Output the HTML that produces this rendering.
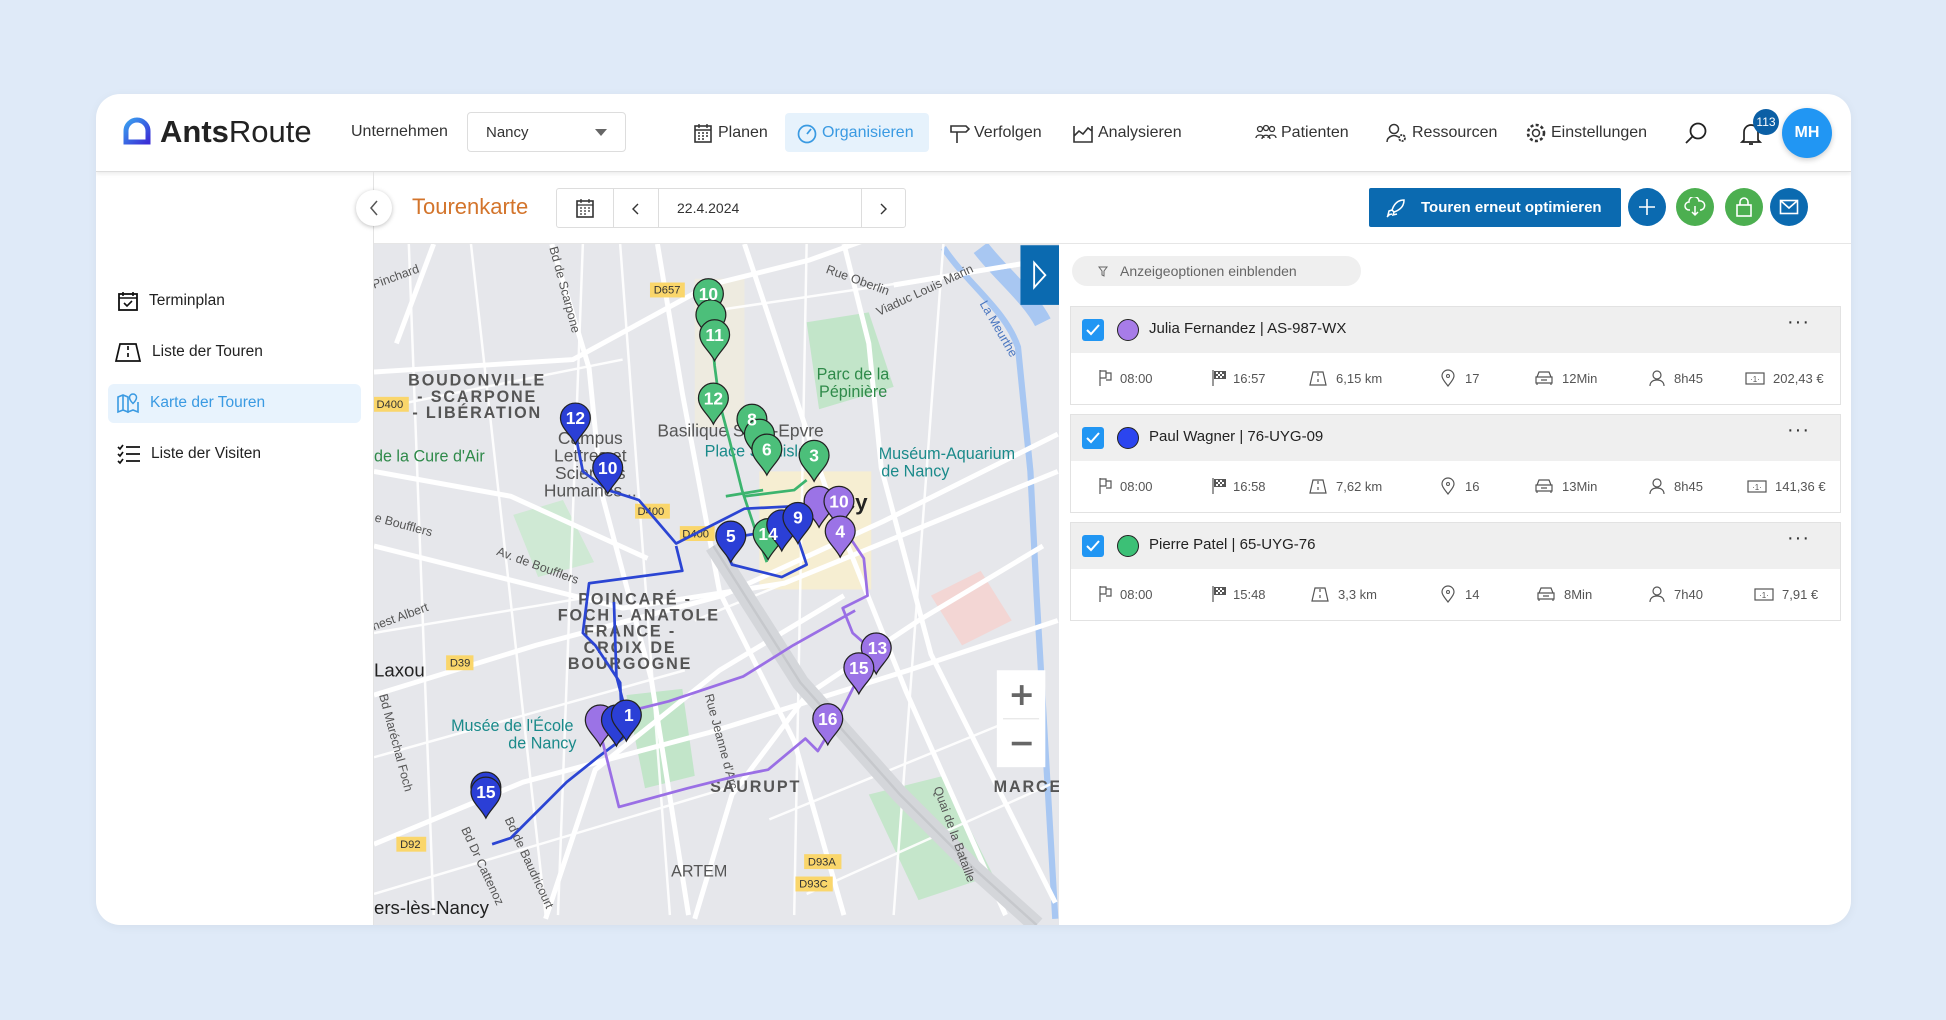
<!DOCTYPE html>
<html><head><meta charset="utf-8">
<style>
*{box-sizing:border-box;margin:0;padding:0}
body{width:1946px;height:1020px;background:#dfeaf8;font-family:"Liberation Sans",sans-serif;position:relative;overflow:hidden;color:#222}
.a{position:absolute}
.card{left:96px;top:94px;width:1755px;height:831px;background:#fff;border-radius:24px;overflow:hidden;box-shadow:0 2px 10px rgba(0,0,0,.05)}
.hdr{left:0;top:0;width:1755px;height:78px;border-bottom:1px solid #ddd;box-shadow:0 2px 4px rgba(0,0,0,.08)}
.nav{font-size:16px;color:#333;top:0;height:78px;display:flex;align-items:center;gap:4px}
.nav svg{width:22px;height:22px}
.side{font-size:15.5px;color:#222;display:flex;align-items:center;gap:10px}
.st{font-size:13px;color:#555;display:flex;align-items:center;gap:6px;position:absolute}
.tc{left:1070px;width:771px;height:99px;border:1px solid #e2e2e2;background:#fff}
.tch{height:46px;background:#efefef;position:relative}
.cb{position:absolute;left:11px;top:12px;width:22px;height:22px;background:#2196f3;border-radius:3px}
.dot{position:absolute;left:46px;top:12px;width:22px;height:22px;border-radius:50%;border:1.5px solid #222}
.nm{position:absolute;left:78px;top:13px;font-size:15px;color:#222}
.more{position:absolute;right:30px;top:4px;font-size:20px;letter-spacing:1px;color:#333}
.rb{width:38px;height:38px;border-radius:50%;top:94px;display:flex;align-items:center;justify-content:center}
</style></head><body>
<div class="a card">
 <div class="a hdr">
  <svg class="a" style="left:27px;top:23px" width="28" height="28" viewBox="0 0 28 28"><defs><linearGradient id="lg" x1="0" y1="0" x2="1" y2="1"><stop offset="0" stop-color="#3aa0f0"/><stop offset="1" stop-color="#3b2fd6"/></linearGradient></defs><path d="M14 3a11 11 0 0 0-11 11v11h22V14A11 11 0 0 0 14 3z" fill="none" stroke="url(#lg)" stroke-width="5"/></svg>
  <div class="a" style="left:64px;top:20px;font-size:31px;color:#222"><b>Ants</b>Route</div>
  <div class="a" style="left:255px;top:29px;font-size:16px;color:#333">Unternehmen</div>
  <div class="a" style="left:371px;top:18px;width:159px;height:40px;border:1px solid #ddd;border-radius:4px;font-size:15px;padding:11px 18px;color:#333">Nancy<span style="position:absolute;right:18px;top:16px;border:6px solid transparent;border-top:7px solid #666;border-bottom:0"></span></div>
  <div class="a nav" style="left:596px"><svg viewBox="0 0 22 22"><rect x="3" y="4" width="16" height="16" fill="none" stroke="#333" stroke-width="1.6"/><path d="M3 8h16M7 2v4M15 2v4M6 11h2M10 11h2M14 11h2M6 14h2M10 14h2M14 14h2M6 17h2M10 17h2" stroke="#333" stroke-width="1.4"/></svg>Planen</div>
  <div class="a" style="left:689px;top:19px;width:144px;height:39px;background:#e6f2fc;border-radius:4px"></div>
  <div class="a nav" style="left:700px;color:#3a9ae2"><svg viewBox="0 0 22 22"><circle cx="11" cy="12" r="8.5" fill="none" stroke="#3a9ae2" stroke-width="1.7"/><path d="M11 12l4-5" stroke="#3a9ae2" stroke-width="1.8"/></svg>Organisieren</div>
  <div class="a nav" style="left:852px"><svg viewBox="0 0 22 22"><path d="M3 4h15l3 3-3 3H3zM9 10v11" fill="none" stroke="#333" stroke-width="1.6"/></svg>Verfolgen</div>
  <div class="a nav" style="left:976px"><svg viewBox="0 0 22 22"><path d="M2 4v16h18V4M2 14l5-5 4 3 5-6 4 3" fill="none" stroke="#333" stroke-width="1.6"/></svg>Analysieren</div>
  <div class="a nav" style="left:1159px"><svg viewBox="0 0 22 22"><circle cx="5" cy="7" r="2.5" fill="none" stroke="#333" stroke-width="1.3"/><circle cx="11" cy="6" r="2.5" fill="none" stroke="#333" stroke-width="1.3"/><circle cx="17" cy="7" r="2.5" fill="none" stroke="#333" stroke-width="1.3"/><path d="M1 16c0-4 8-4 8 0M7 17c0-5 8-5 8 0M13 16c0-4 8-4 8 0" fill="none" stroke="#333" stroke-width="1.3"/></svg>Patienten</div>
  <div class="a nav" style="left:1290px"><svg viewBox="0 0 22 22"><circle cx="8" cy="7" r="4.5" fill="none" stroke="#333" stroke-width="1.5"/><path d="M1 20c0-6 8-8 11-5" fill="none" stroke="#333" stroke-width="1.5"/><circle cx="16" cy="16" r="3" fill="none" stroke="#333" stroke-width="1.8" stroke-dasharray="2 1"/></svg>Ressourcen</div>
  <div class="a nav" style="left:1429px"><svg viewBox="0 0 22 22"><circle cx="11" cy="11" r="3.5" fill="none" stroke="#333" stroke-width="1.5"/><circle cx="11" cy="11" r="8" fill="none" stroke="#333" stroke-width="2.6" stroke-dasharray="3 2.3"/></svg>Einstellungen</div>
  <svg class="a" style="left:1588px;top:27px" width="24" height="24" viewBox="0 0 24 24"><circle cx="14" cy="10" r="7.5" fill="none" stroke="#222" stroke-width="1.8"/><path d="M9 15l-7 7" stroke="#222" stroke-width="1.8"/></svg>
  <svg class="a" style="left:1644px;top:27px" width="22" height="26" viewBox="0 0 22 26"><path d="M4 19V11a7 7 0 0 1 14 0v8l2 2H2z M9 23h4" fill="none" stroke="#222" stroke-width="1.7"/></svg>
  <div class="a" style="left:1657px;top:15px;width:26px;height:26px;border-radius:50%;background:#0b5fa5;color:#fff;font-size:12px;display:flex;align-items:center;justify-content:center">113</div>
  <div class="a" style="left:1686px;top:14px;width:50px;height:50px;border-radius:50%;background:#2196f3;color:#fff;font-weight:bold;font-size:16px;display:flex;align-items:center;justify-content:center;box-shadow:0 2px 6px rgba(0,0,0,.2)">MH</div>
 </div>
 <div class="a side" style="left:21px;top:196px"><svg width="22" height="22" viewBox="0 0 22 22"><rect x="2" y="4" width="18" height="16" fill="none" stroke="#111" stroke-width="1.8"/><path d="M2 8h18M6 2v4M16 2v4M7 13l3 3 5-5" fill="none" stroke="#111" stroke-width="1.6"/></svg>Terminplan</div>
 <div class="a side" style="left:18px;top:247px"><svg width="28" height="22" viewBox="0 0 28 22"><path d="M6 3h16l4 17H2z M14 5v4M14 12v4" fill="none" stroke="#111" stroke-width="1.7"/></svg>Liste der Touren</div>
 <div class="a" style="left:12px;top:290px;width:253px;height:39px;background:#e8f3fd;border-radius:6px"></div>
 <div class="a side" style="left:20px;top:298px;color:#3a9ae2"><svg width="24" height="22" viewBox="0 0 24 22"><path d="M2 5l5-2 5 2v15l-5-2-5 2zM7 3v15M12 7v13l5-2 5 2V10" fill="none" stroke="#3a9ae2" stroke-width="1.6"/><path d="M17 2a3.5 3.5 0 0 1 3.5 3.5c0 2.5-3.5 6-3.5 6s-3.5-3.5-3.5-6A3.5 3.5 0 0 1 17 2z" fill="none" stroke="#3a9ae2" stroke-width="1.5"/></svg>Karte der Touren</div>
 <div class="a side" style="left:21px;top:349px"><svg width="24" height="22" viewBox="0 0 24 22"><path d="M1 4l2 2 3-4M1 11l2 2 3-4M1 18l2 2 3-4M9 4h14M9 11h14M9 18h14" fill="none" stroke="#111" stroke-width="1.7"/></svg>Liste der Visiten</div>
 <div class="a" style="left:277px;top:78px;width:1px;height:753px;background:#e3e3e3"></div>
 <div class="a" style="left:260px;top:96px;width:36px;height:36px;border-radius:50%;background:#fff;box-shadow:0 1px 5px rgba(0,0,0,.25);display:flex;align-items:center;justify-content:center"><svg width="10" height="16" viewBox="0 0 10 16"><path d="M8 1L2 8l6 7" fill="none" stroke="#555" stroke-width="1.5"/></svg></div>
 <div class="a" style="left:316px;top:100px;font-size:22px;color:#d3742b">Tourenkarte</div>
 <div class="a" style="left:460px;top:94px;width:350px;height:40px;border:1px solid #ddd;border-radius:3px;background:#fff">
  <div class="a" style="left:56px;top:0;width:1px;height:38px;background:#ddd"></div>
  <div class="a" style="left:101px;top:0;width:1px;height:38px;background:#ddd"></div>
  <div class="a" style="left:304px;top:0;width:1px;height:38px;background:#ddd"></div>
  <svg class="a" style="left:18px;top:9px" width="20" height="20" viewBox="0 0 20 20"><rect x="2" y="3" width="16" height="16" fill="none" stroke="#333" stroke-width="1.6"/><path d="M2 7h16M6 1v4M14 1v4M5 10h2M9 10h2M13 10h2M5 13h2M9 13h2M13 13h2M5 16h2M9 16h2" stroke="#333" stroke-width="1.3"/></svg>
  <svg class="a" style="left:75px;top:14px" width="7" height="12" viewBox="0 0 7 12"><path d="M6 1L1 6l5 5" fill="none" stroke="#333" stroke-width="1.4"/></svg>
  <div class="a" style="left:120px;top:11px;font-size:14px;color:#333">22.4.2024</div>
  <svg class="a" style="left:323px;top:14px" width="7" height="12" viewBox="0 0 7 12"><path d="M1 1l5 5-5 5" fill="none" stroke="#333" stroke-width="1.4"/></svg>
 </div>
 <div class="a" style="left:1273px;top:94px;width:252px;height:39px;background:#0b6ab0;border-radius:2px;color:#fff;font-weight:bold;font-size:15px;display:flex;align-items:center;padding-left:52px">Touren erneut optimieren
  <svg class="a" style="left:16px;top:9px" width="22" height="22" viewBox="0 0 22 22"><path d="M19 3c-6 0-10 4-12 10l2 2c6-2 10-6 10-12zM7 13l-3 1-1 4 4-1M9 15l-1 3 4-1M5 17l-3 3" fill="none" stroke="#fff" stroke-width="1.5"/></svg></div>
 <div class="a rb" style="left:1532px;background:#0b6ab0"><svg width="20" height="20" viewBox="0 0 20 20"><path d="M10 2v16M2 10h16" stroke="#fff" stroke-width="1.6"/></svg></div>
 <div class="a rb" style="left:1580px;background:#4caf50"><svg width="22" height="20" viewBox="0 0 22 20"><path d="M6 13H5a4 4 0 0 1 0-8 5 5 0 0 1 10-1 4 4 0 0 1 2 9h-1M11 9v9M8 15l3 3 3-3" fill="none" stroke="#fff" stroke-width="1.5"/></svg></div>
 <div class="a rb" style="left:1629px;background:#4caf50"><svg width="18" height="22" viewBox="0 0 18 22"><rect x="2" y="9" width="14" height="11" fill="none" stroke="#fff" stroke-width="1.6"/><path d="M5 9V6a4 4 0 0 1 8 0v3" fill="none" stroke="#fff" stroke-width="1.6"/></svg></div>
 <div class="a rb" style="left:1674px;background:#0b6ab0"><svg width="20" height="16" viewBox="0 0 20 16"><rect x="1.5" y="1.5" width="17" height="13" fill="none" stroke="#fff" stroke-width="1.6"/><path d="M2 2l8 7 8-7" fill="none" stroke="#fff" stroke-width="1.6"/></svg></div>
 <div class="a" style="left:278px;top:149px;width:1477px;height:1px;background:#e6e6e6"></div>
 <svg class="a" style="left:278px;top:150px" width="685" height="681" viewBox="302 197 551 548" preserveAspectRatio="none" font-family="Liberation Sans,sans-serif">
  <rect x="302" y="197" width="551" height="548" fill="#e6e7eb"/>
  <rect x="612" y="380" width="90" height="95" fill="#f6eed2"/>
  <rect x="560" y="225" width="40" height="120" fill="#f4efd9" opacity=".6"/>
  <path d="M650 260l50-8 20 60-60 18z" fill="#c2e5c9"/>
  <path d="M414 415l40-12 25 50-45 12z" fill="#cfe9d4"/>
  <path d="M505 560l45-5 10 70-40 10z" fill="#c2e5c9"/>
  <path d="M700 640l60-15 40 80-60 20z" fill="#c5e6cb"/>
  <path d="M750 480l40-20 25 40-40 20z" fill="#f3d6d4"/>
  <path d="M760 200c20 30 50 50 60 80l10 100 5 100 15 260" fill="none" stroke="#a8c7f2" stroke-width="5"/>
  <path d="M790 200c15 20 40 40 50 60" fill="none" stroke="#a8c7f2" stroke-width="14"/>
  <g stroke="#fff" stroke-width="4" fill="none">
   <path d="M302 300l160-10 110-60 80-20 70-25"/><path d="M302 440l200 50 130-20 220-90"/>
   <path d="M302 560l130-40 150-40 130-60 140-70"/><path d="M302 680l120-50 150-40 160-50 120-40"/>
   <path d="M445 197l30 100 10 100 40 150 30 190"/><path d="M530 197l20 120 30 160 60 120 40 140"/>
   <path d="M600 197l30 90 40 120 60 150 80 180"/><path d="M680 197l20 80 10 100 40 150 100 200"/>
   <path d="M720 230l120-20"/><path d="M302 380l110 20 110 50"/><path d="M350 197l-30 80"/>
   <path d="M440 740l40-120 100-80 100-60"/><path d="M560 740l30-100 60-80 90-60 100-60"/>
  </g>
  <g stroke="#fff" stroke-width="2" fill="none" opacity=".9">
   <path d="M302 330l200 -40M302 510l180-30M302 610l250-70M302 720l300-90M500 197l40 540M470 197l-20 540M650 197l-10 540M760 197l-40 540M620 660l220-90M650 720l200-90M560 500l290-120M580 250l270-40M380 197l60 540M330 197l20 540"/>
  </g>
  <path d="M575 440l70 110 80 90 60 60 50 45" fill="none" stroke="#d4d6da" stroke-width="14"/>
  <path d="M575 440l70 110 80 90 60 60 50 45" fill="none" stroke="#c6c8cc" stroke-width="2"/>
  <g font-size="9" fill="#333"><rect x="524" y="228" width="28" height="12" fill="#fad66b"/><text x="527" y="237">D657</text><rect x="302" y="320" width="28" height="12" fill="#fad66b"/><text x="304" y="329">D400</text><rect x="512" y="406" width="28" height="12" fill="#fad66b"/><text x="514" y="415">D400</text><rect x="548" y="424" width="28" height="12" fill="#fad66b"/><text x="550" y="433">D400</text><rect x="360" y="528" width="22" height="12" fill="#fad66b"/><text x="363" y="537">D39</text><rect x="320" y="674" width="24" height="12" fill="#fad66b"/><text x="323" y="683">D92</text><rect x="648" y="688" width="30" height="12" fill="#fad66b"/><text x="651" y="697">D93A</text><rect x="641" y="706" width="30" height="12" fill="#fad66b"/><text x="644" y="715">D93C</text></g>
  <g font-size="13" fill="#555" font-weight="bold" letter-spacing="1.5" text-anchor="middle"><text x="385" y="311">BOUDONVILLE</text><text x="385" y="324">- SCARPONE</text><text x="385" y="337">- LIBÉRATION</text><text x="512" y="487">POINCARÉ -</text><text x="515" y="500">FOCH - ANATOLE</text><text x="508" y="513">FRANCE -</text><text x="508" y="526">CROIX DE</text><text x="508" y="539">BOURGOGNE</text><text x="609" y="638">SAURUPT</text><text x="828" y="638">MARCE</text></g>
  <g font-size="14" fill="#555"><text x="476" y="358" text-anchor="middle">Campus</text><text x="476" y="372" text-anchor="middle">Lettres et</text><text x="476" y="386" text-anchor="middle">Sciences</text><text x="476" y="400" text-anchor="middle">Humaines...</text><text x="530" y="352">Basilique Saint-Epvre</text><text x="541" y="706" font-size="13">ARTEM</text></g>
  <g font-size="13" fill="#2f8a4a"><text x="658" y="306">Parc de la</text><text x="660" y="320">Pépinière</text><text x="302" y="372">de la Cure d'Air</text></g>
  <g font-size="13" fill="#1a8a8a"><text x="708" y="370">Muséum-Aquarium</text><text x="710" y="384">de Nancy</text><text x="568" y="368">Place Stanislas</text><text x="364" y="589">Musée de l'École</text><text x="410" y="603">de Nancy</text></g>
  <text x="302" y="545" font-size="15" fill="#222">Laxou</text><text x="302" y="736" font-size="15" fill="#222">ers-lès-Nancy</text><text x="668" y="411" font-size="18" font-weight="bold" fill="#222">ncy</text>
  <g font-size="10" fill="#555"><text transform="translate(665 220) rotate(20)">Rue Oberlin</text><text transform="translate(708 255) rotate(-25)">Viaduc Louis Marin</text><text transform="translate(789 245) rotate(60)" fill="#4a76c0">La Meurthe</text><text transform="translate(302 233) rotate(-20)">Pinchard</text><text transform="translate(443 200) rotate(75)">Bd de Scarpone</text><text transform="translate(400 447) rotate(20)">Av. de Boufflers</text><text transform="translate(302 420) rotate(15)">e Boufflers</text><text transform="translate(302 508) rotate(-20)">nest Albert</text><text transform="translate(568 560) rotate(75)">Rue Jeanne d'Arc</text><text transform="translate(752 635) rotate(70)">Quai de la Bataille</text><text transform="translate(306 560) rotate(75)">Bd Maréchal Foch</text><text transform="translate(372 668) rotate(65)">Bd Dr Cattenoz</text><text transform="translate(407 660) rotate(65)">Bd de Baudricourt</text></g>
  <g fill="none" stroke-width="2.2" stroke-linejoin="round">
   <path d="M571 240l5 55 4 30 8 30 10 40 10 30 10 28M600 400l40-5 10-8M585 400l30-5" stroke="#3cb46e"/>
   <path d="M464 350l6 30 20 15 25 8 30 35 55-28 40-2M545 440l5 20-75 10-5 40 10 10 20 30 2 45-20 15-25 20-45 45-15 5M505 575l-8-30-2-60M590 455l-10-20 60-10 10 30-20 10z" stroke="#2b45d3"/>
   <path d="M676 420l20 30 3 30-20 10 8 20 17 15-12 20-15 30-18 30-10-10-30 25-25 5-40 10-55 15-15-60 15-15 40-10 60-20 40-25 50-28" stroke="#9a6fe5"/>
  </g>
  <defs>
   <path id="pin" d="M0 -12a12 12 0 0 1 12 12c0 8-8 13-12 21c-4-8-12-13-12-21a12 12 0 0 1 12-12z" stroke="#222" stroke-width="1"/>
  </defs>
  <g font-size="14" font-weight="bold" fill="#fff" text-anchor="middle">
   <g fill="#4cbf7a"><use href="#pin" x="571" y="237"/><use href="#pin" x="573" y="254"/><use href="#pin" x="576" y="270"/><use href="#pin" x="575" y="321"/><use href="#pin" x="606" y="338"/><use href="#pin" x="612" y="350"/><use href="#pin" x="618" y="362"/><use href="#pin" x="656" y="367"/><use href="#pin" x="619" y="430"/></g>
   <g fill="#9b73e6"><use href="#pin" x="660" y="404"/><use href="#pin" x="676" y="404"/><use href="#pin" x="677" y="428"/><use href="#pin" x="706" y="522"/><use href="#pin" x="692" y="538"/><use href="#pin" x="667" y="579"/><use href="#pin" x="484" y="580"/></g>
   <g fill="#2b3fd6"><use href="#pin" x="464" y="337"/><use href="#pin" x="490" y="377"/><use href="#pin" x="589" y="432"/><use href="#pin" x="630" y="423"/><use href="#pin" x="643" y="417"/><use href="#pin" x="497" y="580"/><use href="#pin" x="505" y="576"/><use href="#pin" x="392" y="634"/><use href="#pin" x="392" y="638"/></g>
   <text x="571" y="242">10</text><text x="576" y="275">11</text><text x="575" y="326">12</text><text x="606" y="343">8</text><text x="618" y="367">6</text><text x="656" y="372">3</text><text x="619" y="435">14</text>
   <text x="676" y="409">10</text><text x="677" y="433">4</text><text x="707" y="527">13</text><text x="692" y="543">15</text><text x="667" y="584">16</text>
   <text x="464" y="342">12</text><text x="490" y="382">10</text><text x="589" y="437">5</text><text x="643" y="422">9</text><text x="392" y="643">15</text><text x="507" y="581">1</text>
  </g>
  <rect x="822" y="198" width="31" height="48" fill="#0b6ab0"/>
  <path d="M833 212l9 10-9 10z" fill="none" stroke="#fff" stroke-width="1.5"/>
  <rect x="803" y="540" width="39" height="78" fill="#fff"/>
  <path d="M815 560h16M823 552v16M815 599h16" stroke="#666" stroke-width="3"/>
  <path d="M808 579h29" stroke="#e6e6e6"/>
 </svg>
 <div class="a" style="left:976px;top:162px;width:289px;height:30px;background:#efefef;border-radius:15px;font-size:14px;color:#666;padding:7px 0 0 48px">Anzeigeoptionen einblenden<svg class="a" style="left:26px;top:10px" width="10" height="11" viewBox="0 0 10 11"><path d="M1 1h8L6 5v5L4 9V5z" fill="none" stroke="#666" stroke-width="1"/></svg></div>
</div>
<div class="a tc" style="top:306px"><div class="tch"><div class="cb"></div><svg class="a" style="left:15px;top:17px" width="14" height="12" viewBox="0 0 14 12"><path d="M1 6l4 4 8-9" fill="none" stroke="#fff" stroke-width="2"/></svg><div class="dot" style="background:#a77ce8"></div><div class="nm">Julia Fernandez | AS-987-WX</div><div class="more">···</div></div></div>
<div class="a tc" style="top:414px"><div class="tch"><div class="cb"></div><svg class="a" style="left:15px;top:17px" width="14" height="12" viewBox="0 0 14 12"><path d="M1 6l4 4 8-9" fill="none" stroke="#fff" stroke-width="2"/></svg><div class="dot" style="background:#2b45ef"></div><div class="nm">Paul Wagner | 76-UYG-09</div><div class="more">···</div></div></div>
<div class="a tc" style="top:522px"><div class="tch"><div class="cb"></div><svg class="a" style="left:15px;top:17px" width="14" height="12" viewBox="0 0 14 12"><path d="M1 6l4 4 8-9" fill="none" stroke="#fff" stroke-width="2"/></svg><div class="dot" style="background:#3cc076"></div><div class="nm">Pierre Patel | 65-UYG-76</div><div class="more">···</div></div></div>
<svg width="0" height="0" style="position:absolute"><defs>
 <g id="i1"><path d="M2 1v16M2 2h6v7H2M8 4h5v7H8" fill="none" stroke="#555" stroke-width="1.2"/></g>
 <g id="i2"><path d="M2 1v16" stroke="#555" stroke-width="1.2"/><rect x="3" y="2" width="12" height="8" fill="#555"/><path d="M5 3h2v2H5zM9 3h2v2H9zM7 5h2v2H7zM11 5h2v2h-2zM5 7h2v2H5zM9 7h2v2H9z" fill="#fff"/></g>
 <g id="i3"><path d="M5 3h10l3 13H2zM10 4v3M10 10v3" fill="none" stroke="#555" stroke-width="1.2"/></g>
 <g id="i4"><path d="M9 17c-3-4-6-7-6-10a6 6 0 0 1 12 0c0 3-3 6-6 10z" fill="none" stroke="#555" stroke-width="1.2"/><circle cx="9" cy="7" r="1.5" fill="none" stroke="#555"/></g>
 <g id="i5"><path d="M3 8l2-5h10l2 5M2 8h16v6H2zM3 14v2M17 14v2M7 11h6" fill="none" stroke="#555" stroke-width="1.2"/></g>
 <g id="i6"><circle cx="9" cy="6" r="4" fill="none" stroke="#555" stroke-width="1.2"/><path d="M2 17c0-4 3-6 7-6s7 2 7 6" fill="none" stroke="#555" stroke-width="1.2"/></g>
 <g id="i7"><rect x="1" y="4" width="18" height="11" fill="none" stroke="#555" stroke-width="1.2"/><text x="10" y="13" font-size="8" text-anchor="middle" fill="#555" font-family="Liberation Sans">·1·</text></g>
</defs></svg>
<div class="a" style="left:1070px;top:369px;width:771px">
 <div class="st" style="left:28px"><svg width="16" height="18"><use href="#i1"/></svg>08:00</div>
 <div class="st" style="left:141px"><svg width="16" height="18"><use href="#i2"/></svg>16:57</div>
 <div class="st" style="left:238px"><svg width="22" height="18"><use href="#i3"/></svg>6,15 km</div>
 <div class="st" style="left:369px"><svg width="20" height="18"><use href="#i4"/></svg>17</div>
 <div class="st" style="left:464px"><svg width="22" height="18"><use href="#i5"/></svg>12Min</div>
 <div class="st" style="left:578px"><svg width="20" height="18"><use href="#i6"/></svg>8h45</div>
 <div class="st" style="left:675px"><svg width="22" height="18"><use href="#i7"/></svg>202,43 €</div>
</div>
<div class="a" style="left:1070px;top:477px;width:771px">
 <div class="st" style="left:28px"><svg width="16" height="18"><use href="#i1"/></svg>08:00</div>
 <div class="st" style="left:141px"><svg width="16" height="18"><use href="#i2"/></svg>16:58</div>
 <div class="st" style="left:238px"><svg width="22" height="18"><use href="#i3"/></svg>7,62 km</div>
 <div class="st" style="left:369px"><svg width="20" height="18"><use href="#i4"/></svg>16</div>
 <div class="st" style="left:464px"><svg width="22" height="18"><use href="#i5"/></svg>13Min</div>
 <div class="st" style="left:578px"><svg width="20" height="18"><use href="#i6"/></svg>8h45</div>
 <div class="st" style="left:677px"><svg width="22" height="18"><use href="#i7"/></svg>141,36 €</div>
</div>
<div class="a" style="left:1070px;top:585px;width:771px">
 <div class="st" style="left:28px"><svg width="16" height="18"><use href="#i1"/></svg>08:00</div>
 <div class="st" style="left:141px"><svg width="16" height="18"><use href="#i2"/></svg>15:48</div>
 <div class="st" style="left:240px"><svg width="22" height="18"><use href="#i3"/></svg>3,3 km</div>
 <div class="st" style="left:369px"><svg width="20" height="18"><use href="#i4"/></svg>14</div>
 <div class="st" style="left:466px"><svg width="22" height="18"><use href="#i5"/></svg>8Min</div>
 <div class="st" style="left:578px"><svg width="20" height="18"><use href="#i6"/></svg>7h40</div>
 <div class="st" style="left:684px"><svg width="22" height="18"><use href="#i7"/></svg>7,91 €</div>
</div>
</body></html>
